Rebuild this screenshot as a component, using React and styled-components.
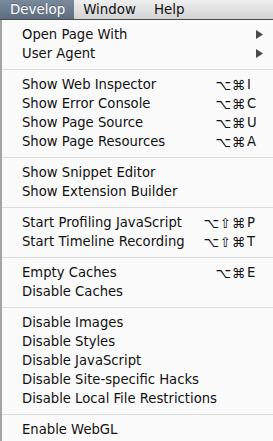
import React from "react";
import styled, { createGlobalStyle } from "styled-components";

const GlobalStyle = createGlobalStyle`
  html, body { margin: 0; padding: 0; background: #f6f6f6; }
  body { font-family: "DejaVu Sans", "Liberation Sans", sans-serif; -webkit-font-smoothing: antialiased; }
`;

const Screen = styled.div`
  width: 273px;
  height: 441px;
  overflow: hidden;
  display: flex;
  flex-direction: column;
`;

const MenuBar = styled.div`
  height: 19px;
  flex: none;
  display: flex;
  align-items: stretch;
  background: linear-gradient(#efefef, #d2d2d2);
  border-bottom: 1px solid #4a4a4a;
`;

const MenuTitle = styled.div`
  display: flex;
  align-items: center;
  padding: 0 ${(p) => (p.$first ? "9px 0 10px" : "9px")};
  font-size: 13.4px;
  color: ${(p) => (p.$active ? "#ffffff" : "#111111")};
  background: ${(p) => (p.$active ? "linear-gradient(#7b8a9b, #5c6d81)" : "transparent")};
  text-shadow: ${(p) => (p.$active ? "0 -1px 0 rgba(0,0,0,0.25)" : "none")};
`;

const Menu = styled.div`
  flex: 1;
  display: flex;
  flex-direction: column;
  padding-top: 5px;
  background: rgba(250, 250, 250, 0.97);
  border-left: 2px solid #a4a4a4;
`;

const Item = styled.div`
  height: 19px;
  display: grid;
  grid-template-columns: 1fr auto;
  align-items: center;
  padding: 0 10px 0 20px;
  font-size: 13.2px;
  color: #111111;
  white-space: nowrap;
`;

const Shortcut = styled.span`
  display: flex;
  align-items: center;
  color: #111111;
`;

const Mods = styled.span`
  text-align: right;
  font-size: 13.6px;
  letter-spacing: 0.6px;
`;

const Key = styled.span`
  width: 16px;
  padding-left: 1px;
  text-align: left;
`;

const Arrow = styled.svg`
  width: 7px;
  height: 9px;
  display: block;
`;

const Separator = styled.div`
  height: 12px;
  flex: none;
  display: flex;
  align-items: center;
  &::after {
    content: "";
    flex: 1;
    height: 1px;
    background: #dcdcdc;
  }
`;

const groups = [
  [
    { label: "Open Page With", sub: true },
    { label: "User Agent", sub: true },
  ],
  [
    { label: "Show Web Inspector", mods: "⌥⌘", key: "I" },
    { label: "Show Error Console", mods: "⌥⌘", key: "C" },
    { label: "Show Page Source", mods: "⌥⌘", key: "U" },
    { label: "Show Page Resources", mods: "⌥⌘", key: "A" },
  ],
  [{ label: "Show Snippet Editor" }, { label: "Show Extension Builder" }],
  [
    { label: "Start Profiling JavaScript", mods: "⌥⇧⌘", key: "P" },
    { label: "Start Timeline Recording", mods: "⌥⇧⌘", key: "T" },
  ],
  [{ label: "Empty Caches", mods: "⌥⌘", key: "E" }, { label: "Disable Caches" }],
  [
    { label: "Disable Images" },
    { label: "Disable Styles" },
    { label: "Disable JavaScript" },
    { label: "Disable Site-specific Hacks" },
    { label: "Disable Local File Restrictions" },
  ],
  [{ label: "Enable WebGL" }],
];

function MenuItem({ item }) {
  return (
    <Item>
      <span>{item.label}</span>
      {item.sub ? (
        <Arrow viewBox="0 0 7 9">
          <polygon points="0,0 7,4.5 0,9" fill="#4a4a4a" />
        </Arrow>
      ) : item.key ? (
        <Shortcut>
          <Mods>{item.mods}</Mods>
          <Key>{item.key}</Key>
        </Shortcut>
      ) : (
        <span />
      )}
    </Item>
  );
}

export default function App() {
  return (
    <Screen>
      <GlobalStyle />
      <MenuBar>
        <MenuTitle $active $first>Develop</MenuTitle>
        <MenuTitle>Window</MenuTitle>
        <MenuTitle>Help</MenuTitle>
      </MenuBar>
      <Menu>
        {groups.map((g, gi) => (
          <React.Fragment key={gi}>
            {gi > 0 && <Separator />}
            {g.map((it) => (
              <MenuItem key={it.label} item={it} />
            ))}
          </React.Fragment>
        ))}
      </Menu>
    </Screen>
  );
}
